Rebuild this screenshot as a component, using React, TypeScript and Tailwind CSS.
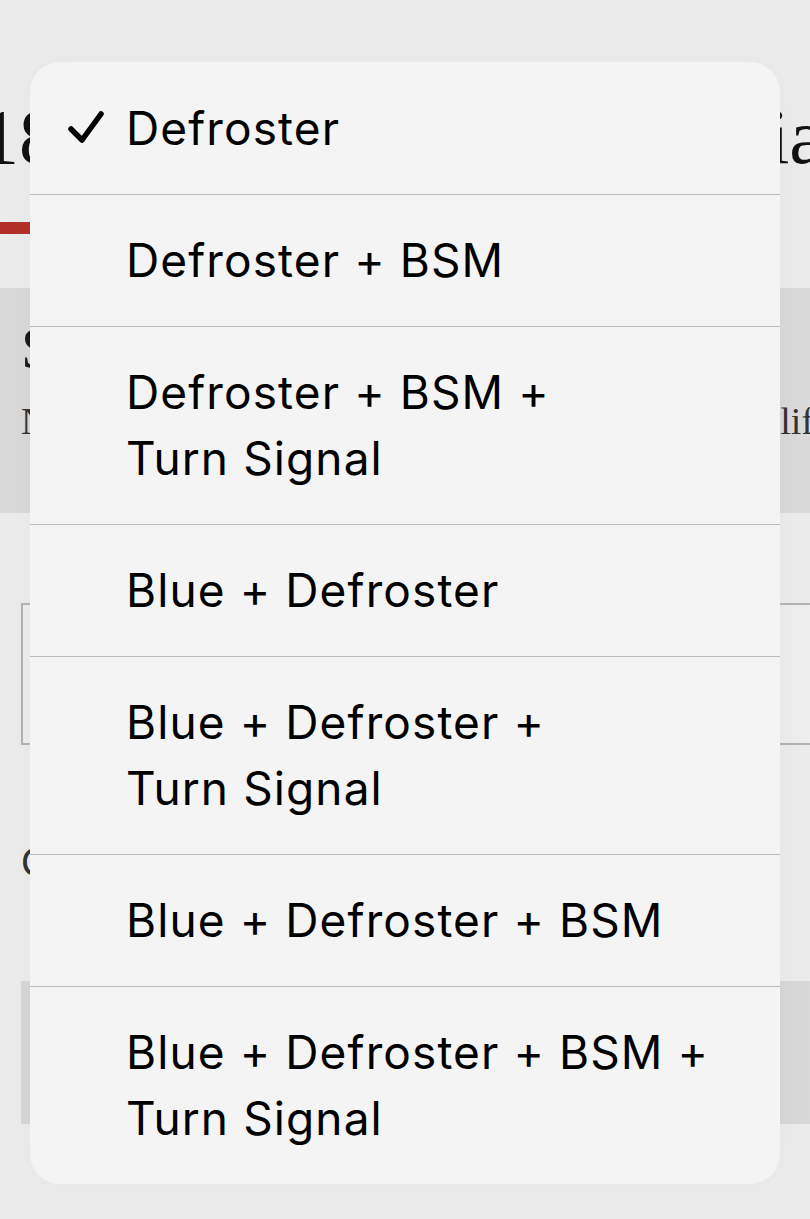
import React from "react";

type Item = { lines: string[]; checked?: boolean };

const items: Item[] = [
  { lines: ["Defroster"], checked: true },
  { lines: ["Defroster + BSM"] },
  { lines: ["Defroster + BSM +", "Turn Signal"] },
  { lines: ["Blue + Defroster"] },
  { lines: ["Blue + Defroster +", "Turn Signal"] },
  { lines: ["Blue + Defroster + BSM"] },
  { lines: ["Blue + Defroster + BSM +", "Turn Signal"] },
];

function Check() {
  return (
    <svg width="40" height="38" viewBox="0 0 40 38" fill="none">
      <path
        d="M5 20 L16 31 L35 5"
        stroke="#000"
        strokeWidth="5.5"
        strokeLinecap="round"
        strokeLinejoin="round"
      />
    </svg>
  );
}

export default function App() {
  return (
    <div className="relative h-[1219px] w-[810px] overflow-hidden bg-[#ececec]">
      {/* Background page */}
      <div className="flex flex-col">
        <div
          className="mt-[98px] flex justify-between whitespace-nowrap text-[78px] leading-[78px] text-[#111]"
          style={{ fontFamily: '"Liberation Serif", serif' }}
        >
          <span className="-ml-[20px]">18</span>
          <span className="-mr-[14px]">ia</span>
        </div>
        <div className="mt-[46px] h-[12px] w-[220px] bg-[#b3302a]" />
        <div
          className="mt-[54px] flex h-[225px] flex-col bg-[#dadada] pl-[21px] pt-[30px]"
          style={{ fontFamily: '"Liberation Serif", serif' }}
        >
          <div className="whitespace-nowrap text-[60px] leading-[60px] text-[#1a1a1a]">
            Se
          </div>
          <div className="mt-[24px] flex justify-between whitespace-nowrap text-[38px] leading-[38px] text-[#333]">
            <span>No</span>
            <span className="-mr-[4px]">lif</span>
          </div>
        </div>
        <div className="ml-[21px] mt-[90px] h-[142px] w-[820px] border-2 border-[#b4b4b4] bg-[#eeeeee]" />
        <div
          className="ml-[21px] mt-[97px] whitespace-nowrap text-[40px] leading-[40px] text-[#333]"
          style={{ fontFamily: '"Liberation Sans", sans-serif' }}
        >
          Co
        </div>
        <div className="ml-[21px] mt-[99px] h-[143px] w-[820px] bg-[#d8d8d8]" />
      </div>

      {/* Dropdown menu overlay */}
      <div
        className="absolute left-[30px] top-[62px] w-[750px] overflow-hidden rounded-[30px] bg-[#f4f4f4] shadow-[0_0_40px_rgba(0,0,0,0.04)]"
        style={{ fontFamily: 'Inter, "Noto Sans", sans-serif' }}
      >
        {items.map((it, i) => (
          <div
            key={i}
            className={
              i === 0
                ? "flex items-center pb-[33px] pt-[33px]"
                : "flex items-center border-t border-[#bcbcbc] pb-[33px] pt-[32px]"
            }
          >
            <div className="flex w-[96px] shrink-0 items-center justify-start pl-[36px]">
              {it.checked ? <Check /> : null}
            </div>
            <div className="text-[46px] font-[420] leading-[66px] tracking-[0.024em] text-black">
              {it.lines.map((l, j) => (
                <div key={j} className="whitespace-nowrap">
                  {l}
                </div>
              ))}
            </div>
          </div>
        ))}
      </div>
    </div>
  );
}
